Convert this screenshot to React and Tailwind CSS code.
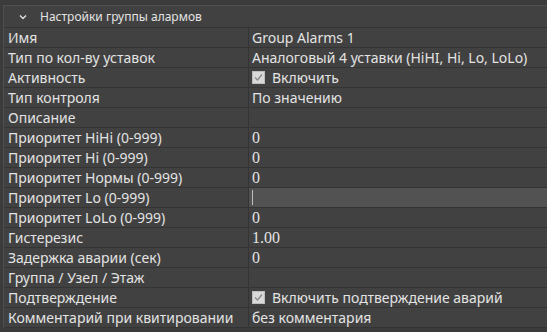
const rows = [
  { label: 'Имя', value: 'Group Alarms 1' },
  { label: 'Тип по кол-ву уставок', value: 'Аналоговый 4 уставки (HiHI, Hi, Lo, LoLo)' },
  { label: 'Активность', value: 'Включить', check: true },
  { label: 'Тип контроля', value: 'По значению' },
  { label: 'Описание', value: '' },
  { label: 'Приоритет HiHi (0-999)', value: '0', num: true },
  { label: 'Приоритет Hi (0-999)', value: '0', num: true },
  { label: 'Приоритет Нормы (0-999)', value: '0', num: true },
  { label: 'Приоритет Lo (0-999)', value: '', editing: true },
  { label: 'Приоритет LoLo (0-999)', value: '0', num: true },
  { label: 'Гистерезис', value: '1.00', num: true },
  { label: 'Задержка аварии (сек)', value: '0', num: true },
  { label: 'Группа / Узел / Этаж', value: '' },
  { label: 'Подтверждение', value: 'Включить подтверждение аварий', check: true },
  { label: 'Комментарий при квитировании', value: 'без комментария' },
];

function CheckBox() {
  return (
    <span className="w-[13px] h-[13px] bg-[#d9d9d9] border border-[#bdbdbd] flex items-center justify-center mr-[7px] shrink-0">
      <svg width="11" height="11" viewBox="0 0 11 11">
        <path d="M2 5.5 L4.5 8 L9 2.5" fill="none" stroke="#8a8a8a" strokeWidth="1.3" />
      </svg>
    </span>
  );
}

function Row({ row }) {
  return (
    <div className="flex h-[20px] border-b border-[#343434]">
      <div className="w-[245px] pl-[4px] flex items-center border-r border-[#343434] whitespace-nowrap overflow-hidden">
        {row.label}
      </div>
      {row.editing ? (
        <div className="flex-1 bg-[#525252] flex items-center pl-[3px]">
          <span className="w-px h-[15px] bg-[#bfbfbf]" />
        </div>
      ) : (
        <div
          className={`flex-1 flex items-center pl-[3px] whitespace-nowrap ${row.num ? 'font-["Liberation_Serif",serif] text-[16px]' : ''}`}
        >
          {row.check && <CheckBox />}
          {row.value}
        </div>
      )}
    </div>
  );
}

export default function App() {
  return (
    <div className="w-[547px] h-[332px] bg-[#3b3b3b] text-[#e3e3e3] text-[14px] leading-none font-['Noto_Sans',sans-serif] overflow-hidden pt-[5px]">
      <div className="ml-[3px] border-t border-l border-[#4f4f4f] bg-[#414141]">
        <div className="h-[22px] flex items-center border-b border-[#343434] text-[12px]">
          <span className="w-[36px] flex justify-center pl-[2px]">
            <svg width="8" height="6" viewBox="0 0 8 6">
              <path d="M1 1.5 L4 4.5 L7 1.5" fill="none" stroke="#e0e0e0" strokeWidth="1.4" />
            </svg>
          </span>
          <span>Настройки группы алармов</span>
        </div>
        {rows.map((r, i) => (
          <Row key={i} row={r} />
        ))}
      </div>
    </div>
  );
}
